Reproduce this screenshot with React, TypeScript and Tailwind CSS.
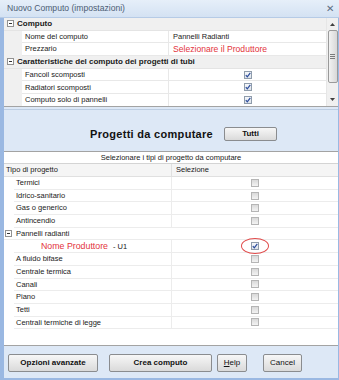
import type { ReactNode } from "react";

function Check({ on }: { on?: boolean }) {
  if (on) {
    return (
      <span className="w-[8px] h-[8px] border border-[#8f9cab] bg-linear-to-b from-[#f6f8fb] to-[#dde3ea] flex items-center justify-center">
        <svg width="6" height="6" viewBox="0 0 6 6">
          <path d="M0.8 3.2 L2.3 4.9 L5.3 0.8" stroke="#2b4c9c" strokeWidth="1.2" fill="none" />
        </svg>
      </span>
    );
  }
  return <span className="w-[8px] h-[8px] border border-[#b5b5b5] bg-linear-to-b from-[#d9d9d9] to-[#f3f3f3]" />;
}

function Expander() {
  return (
    <span className="w-[7px] h-[7px] border border-[#919191] bg-white flex items-center justify-center shrink-0">
      <span className="w-[3px] h-px bg-[#333]" />
    </span>
  );
}

function GroupRow({ label }: { label: string }) {
  return (
    <div className="h-[12.7px] shrink-0 flex items-center bg-[#f0f0f0] border-b border-[#e4e4e4]">
      <span className="ml-[3px]">
        <Expander />
      </span>
      <span className="ml-[3px] text-[8px] font-bold text-[#1a1a1a] leading-none whitespace-nowrap">{label}</span>
    </div>
  );
}

function PropRow({ label, children }: { label: string; children: ReactNode }) {
  return (
    <div className="h-[12.7px] shrink-0 flex">
      <div className="w-[18px] bg-[#f0f0f0]" />
      <div className="w-[147px] flex items-center pl-[3px] border-b border-r border-[#e8e8e8] text-[7.5px] leading-none whitespace-nowrap">
        {label}
      </div>
      <div className="flex-1 flex items-center pl-[4px] border-b border-[#e8e8e8] text-[7.5px] leading-none whitespace-nowrap">
        {children}
      </div>
    </div>
  );
}

function CheckRow({ label, on }: { label: string; on?: boolean }) {
  return (
    <PropRow label={label}>
      <span className="flex-1 flex justify-center pr-[4px]">
        <Check on={on} />
      </span>
    </PropRow>
  );
}

function Scrollbar() {
  return (
    <div className="w-[12px] bg-[#f0f0f0] border-l border-[#e6e6e6] flex flex-col items-center">
      <div className="h-[12px] flex items-center justify-center">
        <svg width="5" height="3" viewBox="0 0 5 3">
          <path d="M0 3 L2.5 0 L5 3 Z" fill="#404040" />
        </svg>
      </div>
      <div className="w-[10px] h-[53px] border border-[#9a9a9a] rounded-[2px] bg-linear-to-r from-[#f2f2f2] to-[#d8d8d8] flex flex-col items-center justify-center gap-px">
        <span className="w-[5px] h-px bg-[#7a7a7a]" />
        <span className="w-[5px] h-px bg-[#7a7a7a]" />
        <span className="w-[5px] h-px bg-[#7a7a7a]" />
      </div>
      <div className="flex-1" />
      <div className="h-[13px] flex items-center justify-center">
        <svg width="5" height="3" viewBox="0 0 5 3">
          <path d="M0 0 L2.5 3 L5 0 Z" fill="#404040" />
        </svg>
      </div>
    </div>
  );
}

function ProjRow({ label }: { label: string }) {
  return (
    <div className="h-[12.7px] shrink-0 flex">
      <div className="w-[10px] shrink-0" />
      <div className="w-[158px] flex items-center pl-[2px] border-b border-r border-[#ececec] text-[7.5px] leading-none whitespace-nowrap">
        {label}
      </div>
      <div className="flex-1 flex items-center justify-center border-b border-[#ececec]">
        <Check />
      </div>
    </div>
  );
}

function Btn({ w, bold, children }: { w: string; bold?: boolean; children: ReactNode }) {
  return (
    <div
      className={`${w} border border-[#8a8c8f] rounded-[2px] bg-linear-to-b from-[#f7f7f7] to-[#dadada] flex items-center justify-center text-[8px] leading-none text-[#111] ${
        bold ? "font-bold" : ""
      }`}
    >
      {children}
    </div>
  );
}

export default function App() {
  return (
    <div className="w-[339px] h-[380px] flex flex-col bg-[#dde8f6] overflow-hidden font-['Liberation_Sans',Arial,sans-serif] text-[#1a1a1a]">
      {/* barra titolo */}
      <div className="h-[18px] shrink-0 flex items-center justify-between px-[7px] bg-linear-to-b from-[#e6eff9] to-[#d4e2f3] border-b border-[#b6cbe6]">
        <span className="text-[8.6px] text-[#4d5d74] leading-none">Nuovo Computo (impostazioni)</span>
        <span className="text-[10px] text-[#5e6e82] leading-none mr-[-2px]">✕</span>
      </div>

      <div className="flex-1 flex flex-col border-l-[4px] border-r border-b-[2px] border-[#9ab8e2]">
        {/* griglia proprietà */}
        <div className="h-[89px] shrink-0 flex bg-white border-b border-[#a3a3a3] overflow-hidden">
          <div className="flex-1 flex flex-col">
            <GroupRow label="Computo" />
            <PropRow label="Nome del computo">Pannelli Radianti</PropRow>
            <PropRow label="Prezzario">
              <span className="text-[8.6px] text-[#e3343c]">Selezionare il Produttore</span>
            </PropRow>
            <GroupRow label="Caratteristiche del computo dei progetti di tubi" />
            <CheckRow label="Fancoil scomposti" on />
            <CheckRow label="Radiatori scomposti" on />
            <CheckRow label="Computo solo di pannelli" on />
          </div>
          <Scrollbar />
        </div>

        {/* pannello titolo */}
        <div className="h-[44px] shrink-0 flex flex-col">
          <div className="h-[3px] border-b border-[#bccde2]" />
          <div className="flex-1 flex items-center pl-[86px] pt-[7px]">
            <span className="w-[134px] shrink-0 text-[11px] font-bold tracking-[0.3px] leading-none text-[#111] whitespace-nowrap">
              Progetti da computare
            </span>
            <Btn w="w-[53px] h-[14px]" bold>
              Tutti
            </Btn>
          </div>
        </div>

        {/* griglia progetti */}
        <div className="h-[195px] shrink-0 flex flex-col bg-white border-t border-b border-[#a3a3a3] overflow-hidden">
          <div className="h-[12px] shrink-0 flex items-center justify-center border-b border-[#d4d4d4] text-[7.5px] leading-none">
            Selezionare i tipi di progetto da computare
          </div>
          <div className="h-[13px] shrink-0 flex bg-[#f5f5f5] border-b border-[#e0e0e0] text-[7.5px] leading-none">
            <div className="w-[168px] flex items-center pl-[2px] border-r border-[#e0e0e0]">Tipo di progetto</div>
            <div className="flex items-center pl-[4px]">Selezione</div>
          </div>
          <ProjRow label="Termici" />
          <ProjRow label="Idrico-sanitario" />
          <ProjRow label="Gas o generico" />
          <ProjRow label="Antincendio" />
          <div className="h-[12.7px] shrink-0 flex items-center border-b border-[#ececec]">
            <span className="ml-[1px]">
              <Expander />
            </span>
            <span className="ml-[4px] text-[7.5px] leading-none">Pannelli radianti</span>
          </div>
          <div className="h-[12.7px] shrink-0 flex">
            <div className="w-[10px] shrink-0" />
            <div className="w-[158px] flex items-center border-b border-r border-[#ececec] leading-none whitespace-nowrap">
              <span className="pl-[27px] text-[8.8px] text-[#e3343c]">Nome Produttore</span>
              <span className="ml-[5px] text-[7.5px]">- U1</span>
            </div>
            <div className="flex-1 flex items-center justify-center border-b border-[#ececec]">
              <span className="relative flex">
                <Check on />
                <span className="absolute left-1/2 top-1/2 -translate-x-1/2 -translate-y-1/2 w-[28px] h-[16px] border border-[#e04a4a] rounded-[50%]" />
              </span>
            </div>
          </div>
          <ProjRow label="A fluido bifase" />
          <ProjRow label="Centrale termica" />
          <ProjRow label="Canali" />
          <ProjRow label="Piano" />
          <ProjRow label="Tetti" />
          <ProjRow label="Centrali termiche di legge" />
        </div>

        {/* pulsanti */}
        <div className="flex-1 flex items-start pt-[8px] pl-[4px] gap-0">
          <Btn w="w-[90px] h-[18px]" bold>
            Opzioni avanzate
          </Btn>
          <span className="ml-[11px]">
            <Btn w="w-[103px] h-[18px]" bold>
              Crea computo
            </Btn>
          </span>
          <span className="ml-[5px]">
            <Btn w="w-[30px] h-[18px]">
              <span className="underline">H</span>elp
            </Btn>
          </span>
          <span className="ml-[16px]">
            <Btn w="w-[39px] h-[18px]">Cancel</Btn>
          </span>
        </div>
      </div>
    </div>
  );
}
